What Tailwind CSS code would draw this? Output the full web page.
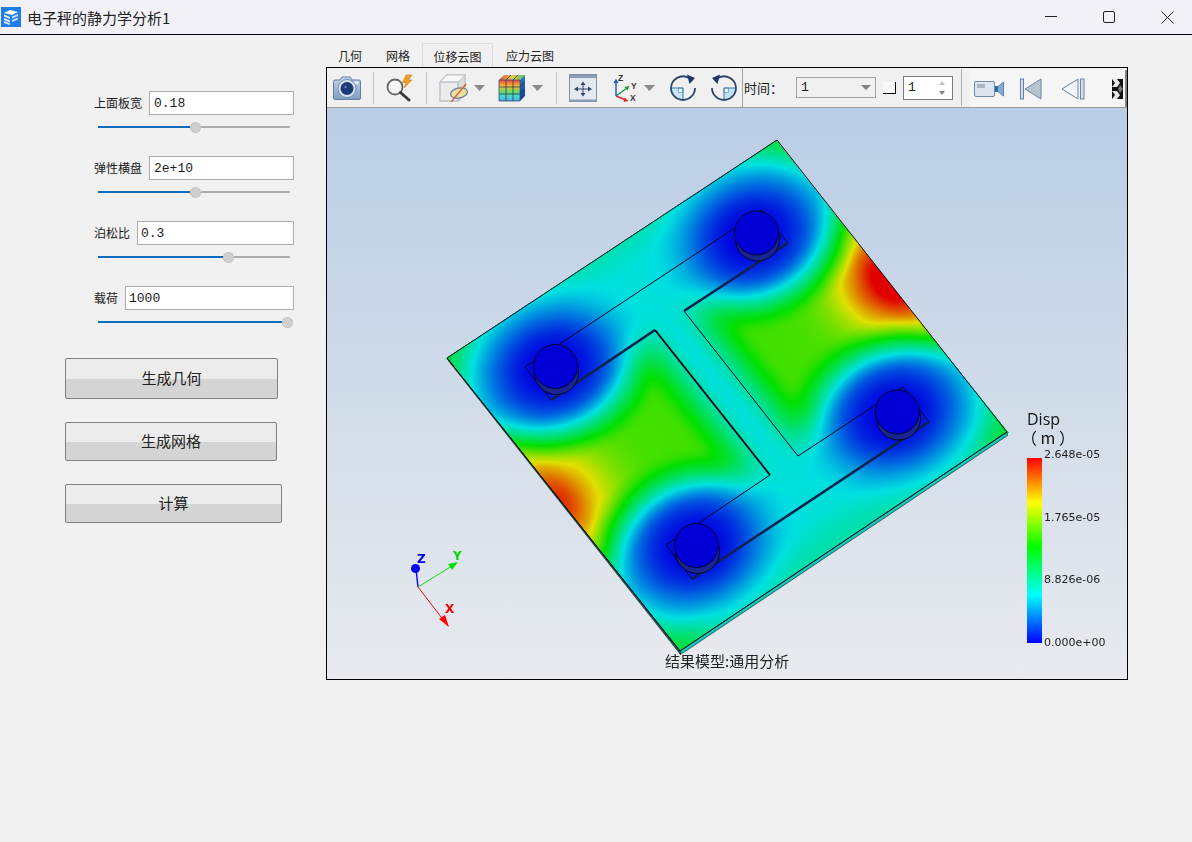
<!DOCTYPE html>
<html lang="zh">
<head>
<meta charset="utf-8">
<title>电子秤的静力学分析1</title>
<script src="https://cdn.jsdelivr.net/npm/@tailwindcss/browser@4"></script>
</head>
<body class="m-0">
<div class="w-[1192px] h-[842px] overflow-hidden flex flex-col bg-[#f1f1f1] text-[#1a1a1a] font-['Noto_Sans_CJK_SC','Liberation_Sans',sans-serif]">

  <!-- title bar -->
  <div class="h-[35px] shrink-0 flex items-center bg-[#f3f1f8] border-b border-black">
    <svg class="ml-[1px] w-[20px] h-[20px] shrink-0" viewBox="0 0 20 20">
      <rect width="20" height="20" fill="#1f7fe8"/>
      <path d="M3 6 L9 3 L17 5 L11 8 Z" fill="#fff"/>
      <path d="M3 7.5 L9 10 V12 L3 9.5 Z M3 11 L9 13.5 V15.5 L3 13 Z M3 14 L9 16.5 V18 L3 16 Z" fill="#e8f2fd"/>
      <path d="M11 9.5 L17 7 V9 L11 11.5 Z M11 13 L17 10.5 V12.5 L11 15 Z" fill="#cfe3fa"/>
    </svg>
    <span class="ml-[6px] text-[15px] leading-none text-[#222]">电子秤的静力学分析1</span>
    <div class="ml-auto pr-[18px] flex items-center gap-[46px]">
      <svg class="w-[12px] h-[12px]" viewBox="0 0 12 12"><path d="M0 5.5 H12" stroke="#222" stroke-width="1"/></svg>
      <svg class="w-[12px] h-[12px]" viewBox="0 0 12 12"><rect x=".5" y=".5" width="11" height="11" rx="1.5" fill="none" stroke="#222"/></svg>
      <svg class="w-[13px] h-[13px]" viewBox="0 0 13 13"><path d="M.5 .5 L12.5 12.5 M12.5 .5 L.5 12.5" stroke="#222"/></svg>
    </div>
  </div>

  <div class="flex flex-1 min-h-0">
    <!-- left panel -->
    <div class="w-[326px] shrink-0 pt-[56px]">
      <div class="pl-[94px] flex flex-col gap-[23px]">
        <div class="w-[200px]">
          <div class="h-[24px] flex items-center gap-[7px]">
            <span class="text-[12px] leading-none whitespace-nowrap">上面板宽</span>
            <div class="flex-1 h-[24px] bg-white border border-[#adadad] pl-[4px] pt-[2px] flex items-center font-['Liberation_Mono',monospace] text-[13px]">0.18</div>
          </div>
          <div class="mt-[6px] ml-[4px] w-[192px] h-[12px] flex items-center">
            <div class="w-[92px] h-[2px] bg-[#0f6cbd]"></div>
            <div class="w-[11px] h-[11px] rounded-full bg-[#cfcfcf] border border-dotted border-[#b5b5b5]"></div>
            <div class="flex-1 h-[2px] bg-[#adadad]"></div>
          </div>
        </div>
        <div class="w-[200px]">
          <div class="h-[24px] flex items-center gap-[7px]">
            <span class="text-[12px] leading-none whitespace-nowrap">弹性横盘</span>
            <div class="flex-1 h-[24px] bg-white border border-[#adadad] pl-[4px] pt-[2px] flex items-center font-['Liberation_Mono',monospace] text-[13px]">2e+10</div>
          </div>
          <div class="mt-[6px] ml-[4px] w-[192px] h-[12px] flex items-center">
            <div class="w-[92px] h-[2px] bg-[#0f6cbd]"></div>
            <div class="w-[11px] h-[11px] rounded-full bg-[#cfcfcf] border border-dotted border-[#b5b5b5]"></div>
            <div class="flex-1 h-[2px] bg-[#adadad]"></div>
          </div>
        </div>
        <div class="w-[200px]">
          <div class="h-[24px] flex items-center gap-[7px]">
            <span class="text-[12px] leading-none whitespace-nowrap">泊松比</span>
            <div class="flex-1 h-[24px] bg-white border border-[#adadad] pl-[3px] pt-[2px] flex items-center font-['Liberation_Mono',monospace] text-[13px]">0.3</div>
          </div>
          <div class="mt-[6px] ml-[4px] w-[192px] h-[12px] flex items-center">
            <div class="w-[125px] h-[2px] bg-[#0f6cbd]"></div>
            <div class="w-[11px] h-[11px] rounded-full bg-[#cfcfcf] border border-dotted border-[#b5b5b5]"></div>
            <div class="flex-1 h-[2px] bg-[#adadad]"></div>
          </div>
        </div>
        <div class="w-[200px]">
          <div class="h-[24px] flex items-center gap-[7px]">
            <span class="text-[12px] leading-none whitespace-nowrap">载荷</span>
            <div class="flex-1 h-[24px] bg-white border border-[#adadad] pl-[3px] pt-[2px] flex items-center font-['Liberation_Mono',monospace] text-[13px]">1000</div>
          </div>
          <div class="mt-[6px] ml-[4px] w-[195px] h-[12px] flex items-center">
            <div class="flex-1 h-[2px] bg-[#0f6cbd]"></div>
            <div class="w-[11px] h-[11px] rounded-full bg-[#cfcfcf] border border-dotted border-[#b5b5b5]"></div>
          </div>
        </div>
      </div>
      <div class="mt-[30px] pl-[65px] flex flex-col items-start gap-[23px] text-[15px] text-[#222]">
        <div class="w-[213px] h-[41px] flex items-center justify-center rounded-[2px] border border-[#808080] bg-[linear-gradient(#ececec_52%,#d4d4d4_52%)]">生成几何</div>
        <div class="w-[212px] h-[39px] flex items-center justify-center rounded-[2px] border border-[#808080] bg-[linear-gradient(#ececec_52%,#d4d4d4_52%)]">生成网格</div>
        <div class="w-[217px] h-[39px] flex items-center justify-center rounded-[2px] border border-[#808080] bg-[linear-gradient(#ececec_52%,#d4d4d4_52%)]">计算</div>
      </div>
    </div>

    <!-- right column -->
    <div class="pt-[8px]">
      <div class="h-[24px] flex items-stretch text-[12px] text-[#222]">
        <div class="w-[48px] flex items-center justify-center pt-[2px]">几何</div>
        <div class="w-[48px] flex items-center justify-center pt-[2px]">网格</div>
        <div class="w-[71px] flex items-center justify-center bg-[#f0f0f0] border border-b-0 border-[#dcdcdc] pt-[2px]">位移云图</div>
        <div class="w-[74px] flex items-center justify-center pt-[2px]">应力云图</div>
      </div>

      <div class="w-[802px] h-[613px] border border-black flex flex-col">
        <!-- toolbar -->
        <div class="h-[40px] shrink-0 flex items-center pl-[6px] bg-[#f0f0f0] border-b border-[#9a9a9a]">
          <!-- camera -->
          <svg class="w-[28px] h-[28px] shrink-0" viewBox="0 0 28 28">
            <defs><linearGradient id="cam" x1="0" y1="0" x2="0" y2="1"><stop offset="0" stop-color="#c4d6ea"/><stop offset="1" stop-color="#7f9cc0"/></linearGradient></defs>
            <path d="M2 6 H7 L9 3 H17 L19 6 H26 a1.5 1.5 0 0 1 1.5 1.5 V24 a1.5 1.5 0 0 1 -1.5 1.5 H2 a1.5 1.5 0 0 1 -1.5 -1.5 V7.5 A1.5 1.5 0 0 1 2 6 Z" fill="url(#cam)" stroke="#5f7ea6"/>
            <rect x="21.5" y="7.5" width="3.5" height="2.5" fill="#eef4fa"/>
            <circle cx="14" cy="14.5" r="9" fill="#d6e2ef" stroke="#6f8db3"/>
            <circle cx="14" cy="14.5" r="6.5" fill="#1c3a78"/>
            <circle cx="12.5" cy="13" r="1.3" fill="#5c7fb8"/>
          </svg>
          <div class="ml-[12px] w-[1px] h-[32px] bg-[#c8c8c8] shrink-0"></div>
          <!-- search + lightning -->
          <svg class="ml-[11px] w-[28px] h-[28px] shrink-0" viewBox="0 0 28 28">
            <circle cx="10" cy="13" r="7.5" fill="#f4f4f4" stroke="#666" stroke-width="1.8"/>
            <path d="M15.5 18.5 L24 26" stroke="#3a3a3a" stroke-width="3" stroke-linecap="round"/>
            <path d="M21 1 L27 1 L23.5 6 L27 6 L19 14 L21 8.5 L17.5 8.5 Z" fill="#f0a030" stroke="#d07a10" stroke-width=".6"/>
          </svg>
          <div class="ml-[13px] w-[1px] h-[32px] bg-[#c8c8c8] shrink-0"></div>
          <!-- box with hidden oval -->
          <svg class="ml-[12px] w-[29px] h-[30px] shrink-0" viewBox="0 0 29 30">
            <path d="M1 9 L8 2 H26 V21 L19 28 H1 Z" fill="#ebebeb" stroke="#bcc0c6" stroke-width="1.4"/>
            <path d="M19 9 L26 2 V21 L19 28 Z" fill="#dcdcdc" stroke="#bcc0c6"/>
            <path d="M1 9 L8 2 H26 L19 9 Z" fill="#f8f8f8" stroke="#bcc0c6"/>
            <path d="M1 9 H19 V28" fill="none" stroke="#bcc0c6" stroke-width="1.2"/>
            <ellipse cx="20" cy="20" rx="8.5" ry="5" transform="rotate(-12 20 20)" fill="#eedf9a" stroke="#6a7ea0" stroke-width="1.2"/>
            <path d="M12 29 L27 11" stroke="#d0603a" stroke-width="1.3"/>
          </svg>
          <svg class="ml-[6px] w-[11px] h-[6px] shrink-0" viewBox="0 0 11 6"><path d="M0 0 H11 L5.5 6 Z" fill="#8a8a8a"/></svg>
          <!-- rainbow cube -->
          <svg class="ml-[13px] w-[28px] h-[28px] shrink-0" viewBox="0 0 28 28">
            <defs>
              <linearGradient id="rb" x1="0" y1="0" x2="0" y2="1"><stop offset="0" stop-color="#f0483a"/><stop offset=".3" stop-color="#f4c030"/><stop offset=".55" stop-color="#6ad860"/><stop offset=".8" stop-color="#48d8d0"/><stop offset="1" stop-color="#48a0e8"/></linearGradient>
              <linearGradient id="rs" x1="0" y1="0" x2="0" y2="1"><stop offset="0" stop-color="#2a7ac0"/><stop offset="1" stop-color="#103a90"/></linearGradient>
              <linearGradient id="rt" x1="0" y1="0" x2="1" y2="0"><stop offset="0" stop-color="#e0503c"/><stop offset=".5" stop-color="#e8c848"/><stop offset="1" stop-color="#50c070"/></linearGradient>
            </defs>
            <rect x="1" y="6" width="21" height="21" fill="url(#rb)"/>
            <path d="M1 6 L6 1 H27 L22 6 Z" fill="url(#rt)"/>
            <path d="M22 6 L27 1 V22 L22 27 Z" fill="url(#rs)"/>
            <path d="M8 6 V27 M15 6 V27 M1 13 H22 M1 20 H22 M8 6 L13 1 M15 6 L20 1 M22 13 L27 8 M22 20 L27 15" stroke="#2a3a60" stroke-width=".8" fill="none"/>
            <path d="M1 6 H22 V27 H1 Z" fill="none" stroke="#34507f" stroke-width=".8"/>
          </svg>
          <svg class="ml-[6px] w-[11px] h-[6px] shrink-0" viewBox="0 0 11 6"><path d="M0 0 H11 L5.5 6 Z" fill="#8a8a8a"/></svg>
          <div class="ml-[13px] w-[1px] h-[32px] bg-[#c8c8c8] shrink-0"></div>
          <!-- fit -->
          <svg class="ml-[12px] w-[28px] h-[28px] shrink-0" viewBox="0 0 28 28">
            <rect x=".5" y=".5" width="27" height="27" fill="#e4e8ef" stroke="#7f90aa"/>
            <rect x="1" y="1" width="26" height="3" fill="#8b9cb6"/>
            <rect x="1" y="25.5" width="26" height="2" fill="#8b9cb6"/>
            <path d="M14 9 L14 21 M8 15 L20 15" stroke="#31476a" stroke-width="1"/>
            <path d="M14 7.5 L16.5 11 H11.5 Z M14 22.5 L16.5 19 H11.5 Z M5 15 L9 12.5 V17.5 Z M23 15 L19 12.5 V17.5 Z" fill="#31476a"/>
          </svg>
          <!-- axes -->
          <svg class="ml-[15px] w-[28px] h-[28px] shrink-0" viewBox="0 0 28 28">
            <path d="M4 22 V7" stroke="#1d57c9" stroke-width="1.4"/>
            <path d="M4 4.5 L6.5 9 H1.5 Z" fill="#1d57c9"/>
            <path d="M4 22 L15 14" stroke="#1d9a4a" stroke-width="1.4"/>
            <path d="M17.5 12 L15.5 16.5 L12.5 13 Z" fill="#1d9a4a"/>
            <path d="M4 22 L14 26" stroke="#e02828" stroke-width="1.4"/>
            <path d="M16.5 27 L11.5 28 L12.5 23.5 Z" fill="#e02828"/>
            <text x="6" y="7" font-size="8.5" font-family="Liberation Sans" font-weight="700" fill="#333">Z</text>
            <text x="19" y="14.5" font-size="8.5" font-family="Liberation Sans" font-weight="700" fill="#333">Y</text>
            <text x="18" y="27" font-size="8.5" font-family="Liberation Sans" font-weight="700" fill="#333">X</text>
          </svg>
          <svg class="ml-[4px] w-[11px] h-[6px] shrink-0" viewBox="0 0 11 6"><path d="M0 0 H11 L5.5 6 Z" fill="#8a8a8a"/></svg>
          <!-- rotate cw -->
          <svg class="ml-[14px] w-[28px] h-[28px] shrink-0" viewBox="0 0 28 28">
            <path d="M2 14 H14 V26 A12 12 0 0 1 2 14 Z" fill="#c9e6f6"/>
            <rect x="9.5" y="14" width="4.5" height="4.5" fill="#e7f4fb" stroke="#4a86b8" stroke-width=".6"/>
            <path d="M14 14 V26 M2 14 H14" stroke="#3d78aa" stroke-width="1"/>
            <path d="M20 4 A12 12 0 0 0 2 14 A12 12 0 0 0 14 26 A12 12 0 0 0 26 14" fill="none" stroke="#2e4668" stroke-width="1.8"/>
            <path d="M18 .5 L26 4 L20.5 10 Z" fill="#1d3a66"/>
          </svg>
          <!-- rotate ccw -->
          <svg class="ml-[13px] w-[28px] h-[28px] shrink-0" viewBox="0 0 28 28">
            <path d="M26 14 H14 V26 A12 12 0 0 0 26 14 Z" fill="#bfe3f7"/>
            <rect x="14" y="14" width="4.5" height="4.5" fill="#e7f4fb" stroke="#4a86b8" stroke-width=".6"/>
            <path d="M14 14 V26 M26 14 H14" stroke="#3d78aa" stroke-width="1"/>
            <path d="M8 4 A12 12 0 0 1 26 14 A12 12 0 0 1 14 26 A12 12 0 0 1 2 14" fill="none" stroke="#2e4668" stroke-width="1.8"/>
            <path d="M10 .5 L2 4 L7.5 10 Z" fill="#1d3a66"/>
          </svg>
          <div class="ml-[4px] w-[1px] h-[39px] bg-[#a0a0a0] shrink-0"></div>
          <span class="ml-[1px] w-[39px] shrink-0 text-[13px] leading-none whitespace-nowrap">时间：</span>
          <div class="ml-[13px] w-[80px] h-[21px] shrink-0 border border-[#a0a0a0] bg-[#f0f0f0] flex items-center pl-[4px] font-['Liberation_Mono',monospace] text-[13px]">
            <span>1</span>
            <svg class="ml-auto mr-[4px] w-[10px] h-[5px]" viewBox="0 0 10 5"><path d="M0 0 H10 L5 5 Z" fill="#808080"/></svg>
          </div>
          <div class="ml-[7px] w-[13px] h-[12px] shrink-0 bg-[#f8f8f8] border-r border-b border-black"></div>
          <div class="ml-[7px] w-[50px] h-[24px] shrink-0 border border-[#7a7a7a] bg-white flex items-center pl-[4px] font-['Liberation_Mono',monospace] text-[13px]">
            <span>1</span>
            <svg class="ml-auto mr-[7px] w-[6px] h-[14px]" viewBox="0 0 6 14"><path d="M3 0 L6 4 H0 Z" fill="#c0c0c0"/><path d="M0 10 H6 L3 14 Z" fill="#808080"/></svg>
          </div>
          <div class="ml-[8px] w-[1px] h-[37px] bg-[#b0b0b0] shrink-0"></div>
          <div class="ml-[8px] flex-1 self-stretch mt-[2px] flex items-center bg-[#f5f5f5] border-r-2 border-[#808080] relative">
            <!-- video camera -->
            <svg class="ml-[4px] w-[30px] h-[18px] shrink-0" viewBox="0 0 30 18">
              <rect x=".5" y="1.5" width="20" height="15" rx="1.5" fill="#dfe5ee" stroke="#6f87a8"/>
              <rect x="3" y="4" width="8" height="4" fill="#aab6c6"/>
              <path d="M21 9 L29.5 2 V16 Z" fill="#7fb0d8" stroke="#5d7fa8"/>
              <path d="M21 6 h3 v6 h-3 z" fill="#2a6ea8"/>
            </svg>
            <!-- first -->
            <svg class="ml-[16px] w-[22px] h-[22px] shrink-0" viewBox="0 0 22 22">
              <rect x=".5" y="1" width="3" height="20" fill="#d8dee8" stroke="#5f7ea6"/>
              <path d="M21 1 V21 L5 11 Z" fill="#b9c3cf" stroke="#6b84a6"/>
            </svg>
            <!-- previous -->
            <svg class="ml-[19px] w-[24px] h-[22px] shrink-0" viewBox="0 0 24 22">
              <path d="M17 1 V21 L1 11 Z" fill="#f2f4f7" stroke="#6b84a6"/>
              <rect x="19.5" y="1" width="3.5" height="20" fill="#d8dee8" stroke="#6b84a6"/>
            </svg>
            <!-- overflow chevrons -->
            <svg class="ml-auto mr-[2px] w-[11px] h-[20px] shrink-0" viewBox="0 0 11 20">
              <rect width="11" height="20" fill="#111"/>
              <path d="M0 0 H5 L8 4 L5 8 H0 L3 4 Z M0 12 H5 L8 16 L5 20 H0 L3 16 Z" fill="#e8e8e8"/>
              <path d="M8 6 L11 10 L8 14 L6 10 Z" fill="#777"/>
            </svg>
          </div>
        </div>

        <!-- 3D viewport -->
        <div class="relative flex-1 overflow-hidden bg-[linear-gradient(to_bottom,#b9cde5,#e8eaee)]">
          <canvas id="field" width="800" height="571" class="absolute left-0 top-0 w-[800px] h-[571px]"></canvas>
          <svg class="absolute left-0 top-0 w-[800px] h-[571px]" viewBox="327 108 800 571" fill="none">
            <!-- plate thickness -->
            <path d="M680 651 L1007 432 L1007.5 435.5 L680.5 654.5 Z" fill="#12c9c0" stroke="#10302c" stroke-width=".7"/>
            <path d="M447 358 L449 361.500 L680.500 654.500 L680 651 Z" fill="#1a5a5a" stroke="#0a1a1a" stroke-width=".6"/>
            <path d="M447 358 L777 140 L1007 432 L680 651 Z" stroke="#0a0a0a" stroke-width="1"/>
            <!-- I-beam outline -->
            <path d="M525 367 L551 400 L655 330 L770 475 L666 545 L692 579 L929 422 L903 387 L798 456 L684 311 L788 243 L762 210 Z" stroke="#05052a" stroke-width="1"/>
            <path d="M551 400 L655 330 M692 579 L929 422 M684 311 L788 243" stroke="#12204f" stroke-width="2.6"/>
            <path d="M655 330 L770 475" stroke="#050515" stroke-width="1.8"/>
            <!-- discs -->
            <g stroke="#05052a" stroke-width="1">
              <circle cx="556.500" cy="372.500" r="22" fill="#19268f"/><circle cx="555.5" cy="366.5" r="22" fill="#0000d6"/>
              <circle cx="757.500" cy="239" r="22" fill="#19268f"/><circle cx="756.5" cy="233" r="22" fill="#0000d6"/>
              <circle cx="697.500" cy="551.500" r="22" fill="#19268f"/><circle cx="696.5" cy="545.5" r="22" fill="#0000d6"/>
              <circle cx="898.500" cy="418" r="22" fill="#19268f"/><circle cx="897.5" cy="412" r="22" fill="#0000d6"/>
            </g>
            <!-- triad -->
            <path d="M418 587 L416 569" stroke="#0000ff" stroke-width="1.4"/>
            <circle cx="415.5" cy="568.5" r="4.5" fill="#0000ff"/>
            <path d="M418 587 L452 566" stroke="#00e000" stroke-width="1"/>
            <path d="M458 562 L448 564 L452 570 Z" fill="#00e000"/>
            <path d="M418 587 L448 626" stroke="#ff0000" stroke-width="1"/>
            <path d="M449 627 L439 619 L445 615 Z" fill="#ff0000"/>
            <text x="417" y="563" font-size="12" font-weight="700" font-family="DejaVu Sans" fill="#0000ff">Z</text>
            <text x="453" y="560" font-size="12" font-weight="700" font-family="DejaVu Sans" fill="#00e000">Y</text>
            <text x="445" y="613" font-size="12" font-weight="700" font-family="DejaVu Sans" fill="#ff0000">X</text>
          </svg>

          <!-- legend -->
          <div class="absolute left-[700px] top-[302px] w-[90px] font-['Open_Sans','Noto_Sans_CJK_SC',sans-serif] text-[#111]">
            <div class="text-[16px] leading-[18px] font-medium">Disp</div>
            <div class="-ml-[6px] text-[16px] leading-[18px] whitespace-nowrap font-['Noto_Sans_CJK_SC',sans-serif]">（ m ）</div>
            <div class="mt-[12px] flex">
              <div class="w-[15px] h-[185px] bg-[linear-gradient(to_bottom,#ff0000,#ffff00_24%,#00ff00_48%,#00ffff_74%,#0000ff)]"></div>
              <div class="ml-[2px] h-[194px] mt-[-9px] flex flex-col justify-between font-['DejaVu_Sans',sans-serif] text-[11px] leading-[12px] text-[#222] whitespace-nowrap">
                <span>2.648e-05</span><span>1.765e-05</span><span>8.826e-06</span><span class="mb-[-6px]">0.000e+00</span>
              </div>
            </div>
          </div>

          <div class="absolute left-[338px] top-[544px] text-[15px] leading-[18px] text-[#222] whitespace-nowrap">结果模型:通用分析</div>
        </div>
      </div>
    </div>
  </div>
</div>

<script>
(function () {
  var cv = document.getElementById('field');
  var ctx = cv.getContext('2d');
  var img = ctx.createImageData(800, 571), D = img.data;
  var ox = 327, oy = 108, cx = 727, cy = 395;
  var det = 165 * 146.5 + 109 * 116.5;
  function s(v, a, b) { var t = Math.min(1, Math.max(0, (v - a) / (b - a))); return t * t * (3 - 2 * t); }
  var stops = [[0, 0, 0, 255], [.26, 0, 255, 255], [.52, 0, 255, 0], [.76, 255, 255, 0], [1, 255, 0, 0]];
  function cmap(f) {
    f = Math.min(1, Math.max(0, f));
    for (var i = 1; i < stops.length; i++) if (f <= stops[i][0]) {
      var A = stops[i - 1], B = stops[i], t = (f - A[0]) / (B[0] - A[0]);
      return [A[1] + (B[1] - A[1]) * t, A[2] + (B[2] - A[2]) * t, A[3] + (B[3] - A[3]) * t];
    }
    return [255, 0, 0];
  }
  var discs = [[-120, -120], [120, -120], [-120, 108], [120, 108]];
  var corners = [[-198, -187], [198, -187], [-198, 187], [198, 187]];
  for (var py = 0; py < 571; py++) for (var px = 0; px < 800; px++) {
    var dx = px + ox - cx, dy = py + oy - cy;
    var a = (146.5 * dx - 116.5 * dy) / det, b = (109 * dx + 165 * dy) / det;
    if (Math.abs(a) > 1 || Math.abs(b) > 1) continue;
    var x = a * 198, y = b * 187;
    var w1 = s(Math.abs(x), 0, 62);
    var w2 = s(Math.min(y + 125, 112 - y), 0, 60);
    var extra = .32 * w1 * w2;
    var side = x > 0 ? .42 : .31;
    var rr = (Math.abs(x) - 198) / 50, ry = (y + 6) / 52;
    extra += side * Math.exp(-(rr * rr + ry * ry));
    extra += .05 * Math.max(s(Math.abs(y + 6), 150, 190), s(Math.abs(x), 170, 198));
    for (var j = 0; j < 4; j++) {
      var qx = x - corners[j][0], qy = y - corners[j][1];
      extra += .13 * Math.exp(-(qx * qx + qy * qy) / 1200);
    }
    var m = 1, dmin = 1e9;
    for (var i = 0; i < 4; i++) {
      var ddx = (x - discs[i][0]) * .84, ddy = y - discs[i][1];
      var d = Math.sqrt(ddx * ddx + ddy * ddy);
      if (d < dmin) dmin = d;
      m *= 1 - Math.exp(-Math.pow(d / 58, 3));
    }
    var f = .27 * m + extra * s(dmin, 40, 100);
    var rgb = cmap(f);
    var k = (py * 800 + px) * 4;
    var L = .88;
    D[k] = rgb[0] * L; D[k + 1] = rgb[1] * L; D[k + 2] = rgb[2] * L; D[k + 3] = 255;
  }
  ctx.putImageData(img, 0, 0);
})();
</script>
</body>
</html>
